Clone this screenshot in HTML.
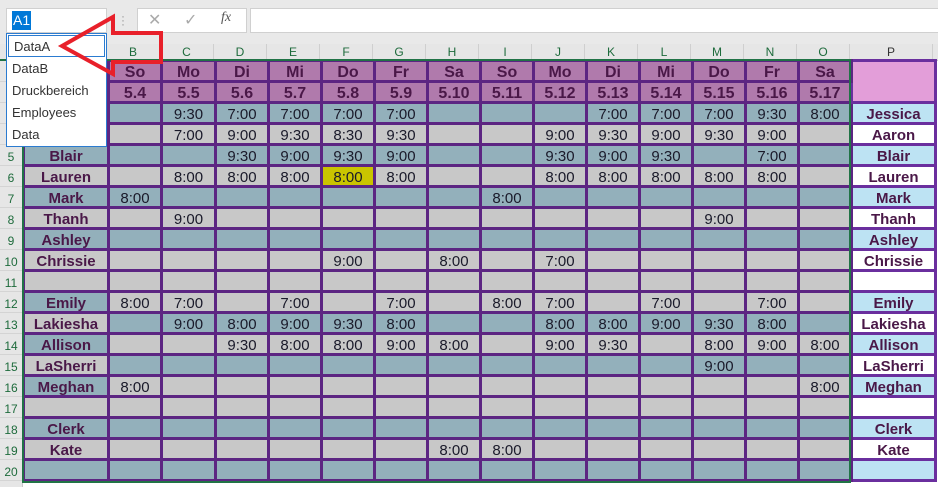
<!DOCTYPE html>
<html><head><meta charset="utf-8"><style>
*{margin:0;padding:0;box-sizing:border-box}
body{width:938px;height:487px;overflow:hidden;background:#fff;font-family:"Liberation Sans",Arial,sans-serif;position:relative}
.top{position:absolute;left:0;top:0;width:938px;height:44px;background:#e9e9e9}
.box{position:absolute;background:#fff;border:1px solid #d0d0d0}
.colh{position:absolute;left:0;top:44px;width:938px;height:17px;background:#e6e6e6;border-bottom:1px solid #c8c8c8}
.colh div{position:absolute;top:0;height:16px;font-size:12px;line-height:16px;text-align:center;color:#1e6b3c;border-right:1px solid #cfcfcf}
.rowh{position:absolute;left:0;top:61px;width:23px;height:426px;background:#e6e6e6;border-right:1px solid #c8c8c8}
.rowh div{height:21px;font-size:12px;line-height:24px;text-align:center;color:#1e6b3c;border-bottom:1px solid #d4d4d4}
table{position:absolute;left:22px;top:59px;border-collapse:collapse;table-layout:fixed;width:912px}
td{height:21px;border:3px solid #5c2582;font-size:15px;text-align:center;color:#1a1a2a;padding:3px 0 0 0;line-height:15px;white-space:nowrap;overflow:hidden}
tr.b td{background:#93b0bb}
tr.g td{background:#c8c8c8}
tr.h td{background:#b07aac;font-weight:bold;color:#4a1848;font-size:16px}
td.n{font-weight:bold;color:#4a1848}
td.bA{background:#93b0bb!important}
td.gA{background:#c8c8c8!important}
td.pb{background:#bde3f3!important;font-weight:bold;color:#4a1848;border-color:#6a2f9e}
td.pw{background:#fff!important;font-weight:bold;color:#4a1848;border-color:#6a2f9e}
td.pk{background:#e39ed9!important;border-color:#6a2f9e}
td.y{background:#cac400!important}
.sel{position:absolute;left:22px;top:59px;width:829px;height:424px;border:2px solid #217346;pointer-events:none}
.dd{position:absolute;left:6px;top:33px;width:101px;height:114px;background:#fff;border:1px solid #2b7bd0}
.dd div{height:22px;font-size:13px;line-height:22px;padding-left:5px;color:#333}
</style></head><body>
<div class="top"></div>
<div class="box" style="left:6px;top:8px;width:101px;height:25px"></div>
<div style="position:absolute;left:12px;top:11px;height:19px;width:19px;background:#0078d7;color:#fff;font-size:14px;line-height:19px;padding-left:1px">A1</div>
<div style="position:absolute;left:121px;top:14px;color:#999;font-size:12px;line-height:4px">·<br>·<br>·</div>
<div class="box" style="left:137px;top:8px;width:110px;height:25px"></div>
<div style="position:absolute;left:148px;top:10px;color:#aaa;font-size:16px">✕</div>
<div style="position:absolute;left:184px;top:10px;color:#aaa;font-size:16px">✓</div>
<div style="position:absolute;left:221px;top:10px;color:#555;font-size:14px;font-style:italic;font-family:'Liberation Serif',serif">fx</div>
<div class="box" style="left:250px;top:8px;width:690px;height:25px"></div>
<div class="colh">
<div style="left:0;width:23px"></div>
<div style="left:23px;width:84px">A</div>
<div style="left:107px;width:53px">B</div><div style="left:160px;width:54px">C</div><div style="left:214px;width:53px">D</div><div style="left:267px;width:53px">E</div><div style="left:320px;width:53px">F</div><div style="left:373px;width:53px">G</div><div style="left:426px;width:53px">H</div><div style="left:479px;width:53px">I</div><div style="left:532px;width:53px">J</div><div style="left:585px;width:53px">K</div><div style="left:638px;width:53px">L</div><div style="left:691px;width:53px">M</div><div style="left:744px;width:53px">N</div><div style="left:797px;width:53px">O</div><div style="left:850px;width:83px;color:#333">P</div>
<div style="left:0;top:15px;width:851px;height:2px;background:#217346"></div>
</div>
<div class="rowh"><div>1</div><div>2</div><div>3</div><div>4</div><div>5</div><div>6</div><div>7</div><div>8</div><div>9</div><div>10</div><div>11</div><div>12</div><div>13</div><div>14</div><div>15</div><div>16</div><div>17</div><div>18</div><div>19</div><div>20</div></div>
<table>
<colgroup><col style="width:85px"><col style="width:53px"><col style="width:54px"><col style="width:53px"><col style="width:53px"><col style="width:53px"><col style="width:53px"><col style="width:53px"><col style="width:53px"><col style="width:53px"><col style="width:53px"><col style="width:53px"><col style="width:53px"><col style="width:53px"><col style="width:53px"><col style="width:84px"></colgroup>
<tr class="h"><td></td><td>So</td><td>Mo</td><td>Di</td><td>Mi</td><td>Do</td><td>Fr</td><td>Sa</td><td>So</td><td>Mo</td><td>Di</td><td>Mi</td><td>Do</td><td>Fr</td><td>Sa</td><td class="pk" rowspan="2"></td></tr>
<tr class="h"><td></td><td>5.4</td><td>5.5</td><td>5.6</td><td>5.7</td><td>5.8</td><td>5.9</td><td>5.10</td><td>5.11</td><td>5.12</td><td>5.13</td><td>5.14</td><td>5.15</td><td>5.16</td><td>5.17</td></tr>
<tr class="b"><td class="n">Jessica</td><td></td><td>9:30</td><td>7:00</td><td>7:00</td><td>7:00</td><td>7:00</td><td></td><td></td><td></td><td>7:00</td><td>7:00</td><td>7:00</td><td>9:30</td><td>8:00</td><td class="pb">Jessica</td></tr>
<tr class="g"><td class="n">Aaron</td><td></td><td>7:00</td><td>9:00</td><td>9:30</td><td>8:30</td><td>9:30</td><td></td><td></td><td>9:00</td><td>9:30</td><td>9:00</td><td>9:30</td><td>9:00</td><td></td><td class="pw">Aaron</td></tr>
<tr class="b"><td class="n">Blair</td><td></td><td></td><td>9:30</td><td>9:00</td><td>9:30</td><td>9:00</td><td></td><td></td><td>9:30</td><td>9:00</td><td>9:30</td><td></td><td>7:00</td><td></td><td class="pb">Blair</td></tr>
<tr class="g"><td class="n">Lauren</td><td></td><td>8:00</td><td>8:00</td><td>8:00</td><td class="y">8:00</td><td>8:00</td><td></td><td></td><td>8:00</td><td>8:00</td><td>8:00</td><td>8:00</td><td>8:00</td><td></td><td class="pw">Lauren</td></tr>
<tr class="b"><td class="n">Mark</td><td>8:00</td><td></td><td></td><td></td><td></td><td></td><td></td><td>8:00</td><td></td><td></td><td></td><td></td><td></td><td></td><td class="pb">Mark</td></tr>
<tr class="g"><td class="n">Thanh</td><td></td><td>9:00</td><td></td><td></td><td></td><td></td><td></td><td></td><td></td><td></td><td></td><td>9:00</td><td></td><td></td><td class="pw">Thanh</td></tr>
<tr class="b"><td class="n">Ashley</td><td></td><td></td><td></td><td></td><td></td><td></td><td></td><td></td><td></td><td></td><td></td><td></td><td></td><td></td><td class="pb">Ashley</td></tr>
<tr class="g"><td class="n">Chrissie</td><td></td><td></td><td></td><td></td><td>9:00</td><td></td><td>8:00</td><td></td><td>7:00</td><td></td><td></td><td></td><td></td><td></td><td class="pw">Chrissie</td></tr>
<tr class="g"><td></td><td></td><td></td><td></td><td></td><td></td><td></td><td></td><td></td><td></td><td></td><td></td><td></td><td></td><td></td><td class="pw"></td></tr>
<tr class="g"><td class="n bA">Emily</td><td>8:00</td><td>7:00</td><td></td><td>7:00</td><td></td><td>7:00</td><td></td><td>8:00</td><td>7:00</td><td></td><td>7:00</td><td></td><td>7:00</td><td></td><td class="pb">Emily</td></tr>
<tr class="b"><td class="n gA">Lakiesha</td><td></td><td>9:00</td><td>8:00</td><td>9:00</td><td>9:30</td><td>8:00</td><td></td><td></td><td>8:00</td><td>8:00</td><td>9:00</td><td>9:30</td><td>8:00</td><td></td><td class="pw">Lakiesha</td></tr>
<tr class="g"><td class="n bA">Allison</td><td></td><td></td><td>9:30</td><td>8:00</td><td>8:00</td><td>9:00</td><td>8:00</td><td></td><td>9:00</td><td>9:30</td><td></td><td>8:00</td><td>9:00</td><td>8:00</td><td class="pb">Allison</td></tr>
<tr class="b"><td class="n gA">LaSherri</td><td></td><td></td><td></td><td></td><td></td><td></td><td></td><td></td><td></td><td></td><td></td><td>9:00</td><td></td><td></td><td class="pw">LaSherri</td></tr>
<tr class="g"><td class="n bA">Meghan</td><td>8:00</td><td></td><td></td><td></td><td></td><td></td><td></td><td></td><td></td><td></td><td></td><td></td><td></td><td>8:00</td><td class="pb">Meghan</td></tr>
<tr class="g"><td></td><td></td><td></td><td></td><td></td><td></td><td></td><td></td><td></td><td></td><td></td><td></td><td></td><td></td><td></td><td class="pw"></td></tr>
<tr class="b"><td class="n">Clerk</td><td></td><td></td><td></td><td></td><td></td><td></td><td></td><td></td><td></td><td></td><td></td><td></td><td></td><td></td><td class="pb">Clerk</td></tr>
<tr class="g"><td class="n">Kate</td><td></td><td></td><td></td><td></td><td></td><td></td><td>8:00</td><td>8:00</td><td></td><td></td><td></td><td></td><td></td><td></td><td class="pw">Kate</td></tr>
<tr class="b"><td></td><td></td><td></td><td></td><td></td><td></td><td></td><td></td><td></td><td></td><td></td><td></td><td></td><td></td><td></td><td class="pb"></td></tr>
</table>
<div class="sel"></div>
<div class="dd">
<div style="border:1px solid #2b7bd0;margin:1px">DataA</div>
<div>DataB</div><div>Druckbereich</div><div>Employees</div><div>Data</div>
</div>
<svg style="position:absolute;left:0;top:0" width="938" height="487">
<polygon points="62,46 113,17 113,33 161,33 161,62 113,62 113,74" fill="none" stroke="#e8202a" stroke-width="4" stroke-linejoin="miter"/>
</svg>
</body></html>
